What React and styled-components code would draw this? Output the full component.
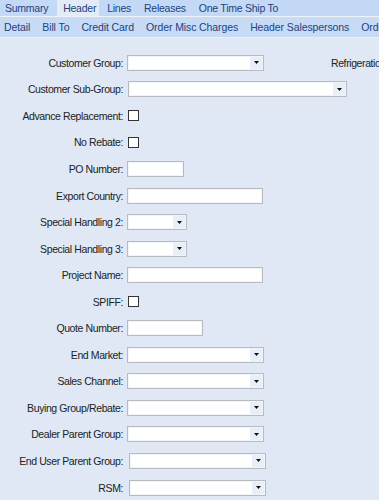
import React from 'react'
import styled, { createGlobalStyle } from 'styled-components'

const Global = createGlobalStyle`
  html, body { margin: 0; padding: 0; }
  body {
    background: #dfe8f4;
    font-family: "Liberation Sans", Arial, sans-serif;
    overflow: hidden;
  }
`

const tabs = ['Summary', 'Header', 'Lines', 'Releases', 'One Time Ship To']
const subTabs = ['Detail', 'Bill To', 'Credit Card', 'Order Misc Charges', 'Header Salespersons', 'Order Notes']

const fields = [
    { label: 'Customer Group:', type: 'select', width: 137, extra: 'Refrigeration' },
    { label: 'Customer Sub-Group:', type: 'select', width: 219, shift: 1 },
    { label: 'Advance Replacement:', type: 'check' },
    { label: 'No Rebate:', type: 'check' },
    { label: 'PO Number:', type: 'text', width: 57 },
    { label: 'Export Country:', type: 'text', width: 136 },
    { label: 'Special Handling 2:', type: 'select', width: 60 },
    { label: 'Special Handling 3:', type: 'select', width: 60 },
    { label: 'Project Name:', type: 'text', width: 136 },
    { label: 'SPIFF:', type: 'check' },
    { label: 'Quote Number:', type: 'text', width: 76 },
    { label: 'End Market:', type: 'select', width: 137 },
    { label: 'Sales Channel:', type: 'select', width: 137 },
    { label: 'Buying Group/Rebate:', type: 'select', width: 137 },
    { label: 'Dealer Parent Group:', type: 'select', width: 137 },
    { label: 'End User Parent Group:', type: 'select', width: 137, shift: 2 },
    { label: 'RSM:', type: 'select', width: 137, shift: 2 },
]

const App = () => {
    return (
        <Page>
            <Global />
            <TabBar>
                {tabs.map(t => (
                    <Tab key={t} active={t === 'Header'}>{t}</Tab>
                ))}
            </TabBar>
            <SubBar>
                {subTabs.map(t => (
                    <SubTab key={t}>{t}</SubTab>
                ))}
            </SubBar>
            <Form>
                {fields.map(f => (
                    <Row key={f.label}>
                        <Label>{f.label}</Label>
                        <Field shift={f.shift || 0}>
                            {f.type === 'check' && <Check />}
                            {f.type === 'text' && <TextBox width={f.width} />}
                            {f.type === 'select' && (
                                <Select width={f.width}>
                                    <Arrow>
                                        <svg width="5" height="3" viewBox="0 0 5 3">
                                            <path d="M0 0h5L2.5 3z" fill="#111" />
                                        </svg>
                                    </Arrow>
                                </Select>
                            )}
                        </Field>
                        {f.extra && <Extra>{f.extra}</Extra>}
                    </Row>
                ))}
            </Form>
        </Page>
    )
}

export default App

const Page = styled.div`
    width: 379px;
    height: 500px;
    overflow: hidden;
    background: #dfe8f4;
`

const TabBar = styled.div`
    display: flex;
    height: 16px;
    padding-left: 1px;
    background: #c4d9f6;
    border-bottom: 1px solid #eef3fa;
    white-space: nowrap;
`

const Tab = styled.div`
    padding: ${p => (p.active ? '0 3px 0 6px' : '0 5px 0 4px')};
    margin-right: 4px;
    font-size: 10.5px;
    letter-spacing: -0.25px;
    line-height: 16px;
    color: #20437f;
    background: ${p => (p.active ? '#e3ebf6' : 'transparent')};
`

const SubBar = styled.div`
    display: flex;
    gap: 12px;
    height: 20px;
    padding-left: 4px;
    background: #c7dbf7;
    border-bottom: 1px solid #e8eff8;
    white-space: nowrap;
`

const SubTab = styled.div`
    font-size: 10.5px;
    letter-spacing: -0.1px;
    line-height: 20px;
    color: #20437f;
`

const Form = styled.div`
    padding-top: 11.5px;
`

const Row = styled.div`
    display: flex;
    align-items: center;
    height: 26.56px;
`

const Label = styled.div`
    width: 123px;
    flex: none;
    text-align: right;
    font-size: 10.5px;
    letter-spacing: -0.4px;
    color: #222;
    white-space: nowrap;
`

const Field = styled.div`
    display: flex;
    align-items: center;
    margin-left: ${p => 4 + p.shift}px;
`

const Check = styled.div`
    width: 9px;
    height: 9px;
    border: 1px solid #333;
    background: #fff;
    margin-left: 1px;
`

const TextBox = styled.div`
    width: ${p => p.width}px;
    height: 16px;
    box-sizing: border-box;
    background: #fff;
    border: 1px solid #b8bcc2;
    box-shadow: inset 0 0 0 1px #f2f4f7;
`

const Select = styled(TextBox)`
    display: flex;
    justify-content: flex-end;
`

const Arrow = styled.div`
    width: 12px;
    display: flex;
    align-items: center;
    justify-content: center;
    background: #e8eff8;
    margin: 1px;
`

const Extra = styled.div`
    margin-left: 67px;
    font-size: 10.5px;
    letter-spacing: -0.4px;
    color: #222;
    white-space: nowrap;
`
